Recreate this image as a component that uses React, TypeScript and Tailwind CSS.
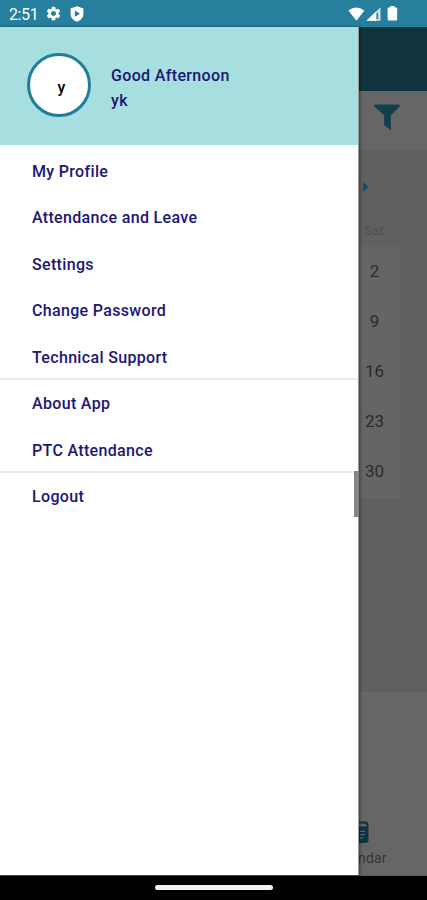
import { MdSettings } from "react-icons/md";

// ===============================================
// MENU DATA
// ===============================================

const menuGroups: string[][] = [
  [
    "My Profile",
    "Attendance and Leave",
    "Settings",
    "Change Password",
    "Technical Support",
  ],
  ["About App", "PTC Attendance"],
  ["Logout"],
];

const saturdays = [2, 9, 16, 23, 30];

// ===============================================
// STATUS BAR
// ===============================================

function StatusBar() {
  return (
    <div className="flex h-[27px] shrink-0 items-center justify-between bg-[#26809d] pr-[29px] pl-[9px] text-white">
      <div className="flex items-center">
        <span className="w-[36px] pt-[2px] text-[16px] leading-none tracking-[-0.4px]">
          2:51
        </span>

        <MdSettings size={17} />

        <svg className="ml-[8px]" width="14" height="16" viewBox="0 0 14 16">
          <path
            d="M7 0.3 13.4 2.6V8c0 3.6-2.7 6.4-6.4 7.7C3.3 14.4.6 11.6.6 8V2.6Z"
            fill="currentColor"
          />
          <path d="M4.9 4.6v6.2L10 7.7Z" fill="#26809d" />
        </svg>
      </div>

      <div className="flex items-center">
        <svg className="ml-px" width="17" height="14" viewBox="0 0 17 14">
          <path d="M.4 3.6Q8.3-2.6 16.4 3.6L8.4 13.8Z" fill="currentColor" />
        </svg>

        <svg className="ml-px" width="15" height="14" viewBox="0 0 15 14">
          <path d="M.5 13.7 14.5.3V13.7Z" fill="currentColor" fillOpacity=".75" />
          <path d="M.5 13.7 10 4.6v9.1Z" fill="currentColor" />
          <path d="M10.5 6h1.6v6h-1.6z" fill="#26809d" />
        </svg>

        <svg className="ml-[6px]" width="11" height="15" viewBox="0 0 11 15">
          <path
            d="M3.3 0h4.2v1.5H9q1.2 0 1.2 1.2v10.6q0 1.2-1.2 1.2H1.8q-1.2 0-1.2-1.2V2.7q0-1.2 1.2-1.2h1.5Z"
            fill="currentColor"
          />
        </svg>
      </div>
    </div>
  );
}

// ===============================================
// NAVIGATION DRAWER
// ===============================================

function Drawer() {
  return (
    <aside className="relative z-10 flex w-[359px] shrink-0 flex-col border-r border-[#9b9b9b] bg-white text-[#1c1674] shadow-[1px_0_3px_rgba(0,0,0,0.45)]">
      <div className="flex h-[118px] shrink-0 items-center bg-[#a7dedf] pl-[27px]">
        <div className="-mt-[2px] flex size-[64px] items-center justify-center rounded-full border-[3px] border-[#1d7f9c] bg-white pt-[5px] pl-[5px] text-[16px] font-medium text-black">
          y
        </div>

        <div className="mt-[3px] ml-[20px] text-[16px] leading-[25px] font-medium tracking-[0.35px]">
          <p>Good Afternoon</p>
          <p>yk</p>
        </div>
      </div>

      <nav>
        {menuGroups.map((group) => (
          <ul
            key={group[0]}
            className="-mb-[2px] border-b-2 border-[#e9e9e9] last:border-b-0"
          >
            {group.map((item) => (
              <li
                key={item}
                className="flex h-[46.5px] items-center pt-[7px] pl-[32px] text-[16px] font-medium tracking-[0.33px]"
              >
                {item}
              </li>
            ))}
          </ul>
        ))}
      </nav>

      <div className="absolute top-[444px] -right-px h-[46px] w-[5px] bg-[#858585]" />
    </aside>
  );
}

// ===============================================
// CALENDAR PAGE BEHIND THE DRAWER
// ===============================================

function DimmedPage() {
  return (
    <main className="flex flex-1 flex-col overflow-hidden bg-[#666666]">
      <div className="h-[64px] shrink-0 bg-[#10333e]" />

      <div className="flex h-[59px] shrink-0 items-start pt-[13px] pl-[15px]">
        <svg width="26" height="27" viewBox="0 0 26 27">
          <path
            d="M.5.5h25V2.8L16.8 11.2V26.3L10.2 21.2V11.2L.5 2.8Z"
            fill="#10404d"
          />
        </svg>
      </div>

      <div className="h-[542px] shrink-0 bg-[#606060] pr-[27px]">
        <div className="flex h-[74px] items-center">
          <svg className="ml-[4px]" width="6" height="12" viewBox="0 0 6 12">
            <path d="M0 1 5.5 6 0 11Z" fill="#0b5278" />
          </svg>
        </div>

        <div className="h-[23px] pl-[5px] text-[13px] leading-[14px] tracking-[0.3px] text-[#4f4f4f]">
          Sat
        </div>

        <div className="bg-[#656565] pb-px">
          {saturdays.map((day) => (
            <div
              key={day}
              className="flex h-[50px] items-center justify-center text-[17px] text-[#2b2b2b]"
            >
              <span className="-ml-[10px]">{day}</span>
            </div>
          ))}
        </div>
      </div>

      <div className="mt-[129px] flex flex-col">
        <svg width="10" height="23" viewBox="0 0 10 23">
          <path d="M0 .5H6.5Q9.5 .5 9.5 4V19Q9.5 22 6.5 22H0Z" fill="#0d3644" />
          <path d="M0 2.6H5Q7.5 2.8 7.7 5.4H0Z" fill="#666666" />
          <path d="M1 10.3H5.8M1 13.6H5.8M1 17H3.6" stroke="#58727b" strokeWidth="1.3" />
        </svg>

        <span className="-ml-px text-[14px] leading-[28px] tracking-[0.2px] text-[#353535]">
          ndar
        </span>
      </div>
    </main>
  );
}

// ===============================================
// APP
// ===============================================

export default function App() {
  return (
    <div className="flex h-[900px] w-[427px] flex-col overflow-hidden bg-black font-['Roboto',sans-serif]">
      <StatusBar />

      <div className="flex h-[848px] shrink-0">
        <Drawer />

        <DimmedPage />
      </div>

      <div className="flex h-[25px] shrink-0 items-center justify-center border-t border-[#555555] bg-black">
        <div className="-mt-px h-[5px] w-[118px] rounded-full bg-[#f1f1f1]" />
      </div>
    </div>
  );
}
